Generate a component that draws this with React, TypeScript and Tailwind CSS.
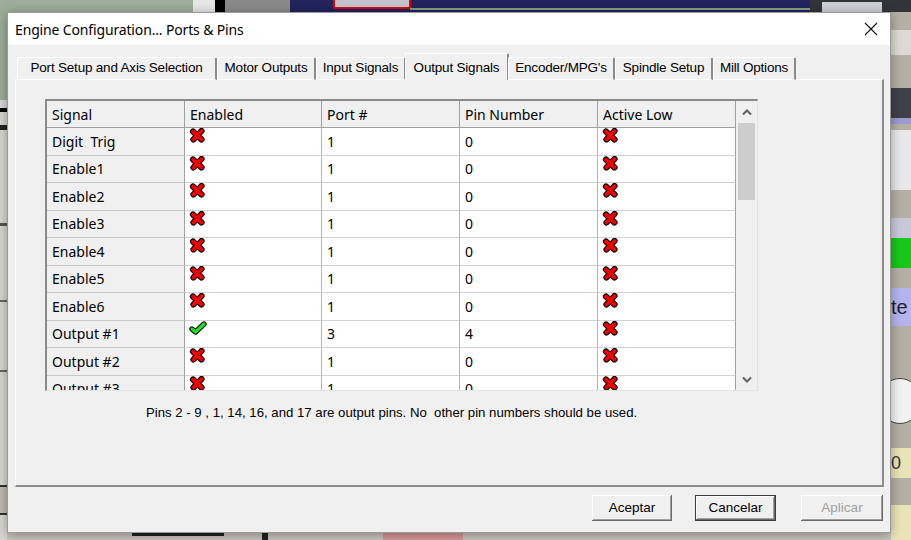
import React from 'react';

const rows = [
    { name: 'Digit  Trig', enabled: false, port: 1, pin: 0, low: false },
    { name: 'Enable1', enabled: false, port: 1, pin: 0, low: false },
    { name: 'Enable2', enabled: false, port: 1, pin: 0, low: false },
    { name: 'Enable3', enabled: false, port: 1, pin: 0, low: false },
    { name: 'Enable4', enabled: false, port: 1, pin: 0, low: false },
    { name: 'Enable5', enabled: false, port: 1, pin: 0, low: false },
    { name: 'Enable6', enabled: false, port: 1, pin: 0, low: false },
    { name: 'Output #1', enabled: true, port: 3, pin: 4, low: false },
    { name: 'Output #2', enabled: false, port: 1, pin: 0, low: false },
    { name: 'Output #3', enabled: false, port: 1, pin: 0, low: false }
];

const tabs = [
    { label: 'Port Setup and Axis Selection', w: 'w-[200px]' },
    { label: 'Motor Outputs', w: 'w-[99px]' },
    { label: 'Input Signals', w: 'w-[90px]' },
    { label: 'Output Signals', w: 'w-[104px]', active: true },
    { label: "Encoder/MPG's", w: 'w-[107px]' },
    { label: 'Spindle Setup', w: 'w-[98px]' },
    { label: 'Mill Options', w: 'w-[83px]' }
];

function RedX() {
    return (
        <svg width="17" height="15" viewBox="0 0 17 15">
            <path d="M4 3.5 L12.5 11.5 M12.5 3 L4.5 11.5" stroke="#000" strokeWidth="6.2" strokeLinecap="round" fill="none" />
            <path d="M4 3.5 L12.5 11.5 M12.5 3 L4.5 11.5" stroke="#f00000" strokeWidth="4" strokeLinecap="round" fill="none" />
        </svg>
    );
}

function GreenCheck() {
    return (
        <svg width="18" height="15" viewBox="0 0 18 15">
            <path d="M3 8 L6.5 11 L15 3" stroke="#000" strokeWidth="5.4" strokeLinecap="round" strokeLinejoin="round" fill="none" />
            <path d="M3 8 L6.5 11 L15 3" stroke="#22e022" strokeWidth="3.2" strokeLinecap="round" strokeLinejoin="round" fill="none" />
        </svg>
    );
}

function Chevron({ down }: { down?: boolean }) {
    return (
        <svg width="10" height="7" viewBox="0 0 10 7">
            <path d={down ? 'M1 1.5 L5 5.5 L9 1.5' : 'M1 5.5 L5 1.5 L9 5.5'} stroke="#606060" strokeWidth="2" fill="none" />
        </svg>
    );
}

function Desktop() {
    // the Mach3 screen behind the dialog
    return (
        <div className="absolute inset-0 bg-[#c9c5be] overflow-hidden">
            <div className="absolute left-0 top-0 w-[193px] h-[100px] bg-[#9cae97]" />
            <div className="absolute left-[193px] top-0 w-[22px] h-[12px] bg-[#e6e6e6]" />
            <div className="absolute left-[215px] top-0 w-[10px] h-[12px] bg-black" />
            <div className="absolute left-[225px] top-0 w-[65px] h-[12px] bg-[#8a8a8a]" />
            <div className="absolute left-[290px] top-0 w-[520px] h-[12px] bg-[#23235e]" />
            <div className="absolute left-[333px] top-0 w-[78px] h-[9px] bg-[#c4c4cc] border-2 border-[#e00000] border-t-0" />
            <div className="absolute left-[410px] top-[8px] w-[400px] h-[2px] bg-[#7fa07f]" />
            <div className="absolute left-[810px] top-0 w-[101px] h-[12px] bg-[#33333a]" />
            <div className="absolute left-[822px] top-[2px] w-[60px] h-[10px] bg-[#cfd0d6]" />
            <div className="absolute left-0 top-[100px] w-[7px] h-[440px] bg-[#d8d6d2]" />
            <div className="absolute left-0 top-[108px] w-[7px] h-[4px] bg-black" />
            <div className="absolute left-0 top-[125px] w-[7px] h-[5px] bg-[#222]" />
            <div className="absolute left-0 top-[223px] w-[7px] h-[3px] bg-[#555]" />
            <div className="absolute left-0 top-[300px] w-[7px] h-[2px] bg-[#666]" />
            <div className="absolute left-0 top-[370px] w-[7px] h-[2px] bg-[#666]" />
            <div className="absolute left-0 top-[485px] w-[7px] h-[30px] bg-[#bdbab0] border-y-2 border-[#333]" />
            <div className="absolute left-[891px] top-[12px] w-[20px] h-[528px] bg-[#b4b0a6]" />
            <div className="absolute left-[891px] top-[30px] w-[20px] h-[25px] bg-[#dcdad2]" />
            <div className="absolute left-[891px] top-[88px] w-[20px] h-[30px] bg-[#40404a]" />
            <div className="absolute left-[891px] top-[118px] w-[20px] h-[6px] bg-[#9a9ad0]" />
            <div className="absolute left-[891px] top-[130px] w-[20px] h-[60px] bg-[#e8e8ea]" />
            <div className="absolute left-[891px] top-[218px] w-[20px] h-[20px] bg-[#c8c8d8]" />
            <div className="absolute left-[891px] top-[238px] w-[20px] h-[30px] bg-[#18c818]" />
            <div className="absolute left-[891px] top-[288px] w-[20px] h-[38px] bg-[#b4b4ee] text-[20px] leading-[38px] text-[#222]">te</div>
            <div className="absolute left-[880px] top-[378px] w-[40px] h-[46px] rounded-full bg-[#f2f2f2] border border-[#444]" />
            <div className="absolute left-[891px] top-[448px] w-[20px] h-[30px] bg-[#e8e4b8] text-[18px] leading-[30px] text-[#333]">0</div>
            <div className="absolute left-[891px] top-[505px] w-[20px] h-[35px] bg-[#e8e4b8]" />
            <div className="absolute left-[132px] top-[533px] w-[92px] h-[3px] bg-[#222]" />
            <div className="absolute left-[262px] top-[533px] w-[6px] h-[7px] bg-[#222]" />
            <div className="absolute left-[383px] top-[533px] w-[80px] h-[7px] bg-[#d89898]" />
        </div>
    );
}

function Button({ label, isDefault, disabled }: { label: string; isDefault?: boolean; disabled?: boolean }) {
    return (
        <div
            className={
                isDefault
                    ? 'w-[81px] h-[26px] flex items-center justify-center bg-[#f0f0f0] border border-[#3c3c3c] shadow-[inset_-1px_-1px_#696969,inset_1px_1px_#ffffff,inset_-2px_-2px_#a0a0a0]'
                    : 'h-[26px] flex items-center justify-center bg-[#f0f0f0] shadow-[inset_-1px_-1px_#696969,inset_1px_1px_#ffffff,inset_-2px_-2px_#a0a0a0]'
            }
        >
            <span className={disabled ? 'text-[#a0a0a0]' : 'text-black'}>{label}</span>
        </div>
    );
}

export default function App() {
    return (
        <div className="relative w-[911px] h-[540px] overflow-hidden font-['Liberation_Sans',Arial,sans-serif]">
            <Desktop />

            <div className="absolute left-[7px] top-[12px] w-[884px] h-[521px] flex flex-col bg-[#f0f0f0] border border-[#9a9a9a] shadow-[0_2px_10px_rgba(0,0,0,0.35)]">
                {/* title bar */}
                <div className="h-[32px] shrink-0 bg-white flex items-center justify-between pl-[7px] pr-[12px]">
                    <span className="text-[14px] text-black font-['Noto_Sans','Open_Sans',sans-serif] tracking-[-0.15px]">
                        Engine Configuration... Ports &amp; Pins
                    </span>
                    <svg width="14" height="14" viewBox="0 0 14 14">
                        <path d="M1 1 L13 13 M13 1 L1 13" stroke="#111" strokeWidth="1.1" />
                    </svg>
                </div>

                {/* tabs */}
                <div className="flex items-end h-[27px] mt-[8px] pl-[9px] relative z-10 text-[13.5px] tracking-[-0.2px] text-black">
                    {tabs.map((tab) => (
                        <div
                            key={tab.label}
                            className={
                                tab.active
                                    ? `${tab.w} h-[27px] -mx-[1px] flex items-start pt-[4px] justify-center bg-[#f0f0f0] border-t border-l border-white border-r-2 border-r-[#8a8a8a] rounded-t-[2px]`
                                    : `${tab.w} h-[23px] flex items-center justify-center bg-[#f0f0f0] border-t border-l border-white border-r-2 border-r-[#8a8a8a] border-b border-b-white rounded-t-[2px]`
                            }
                        >
                            {tab.label}
                        </div>
                    ))}
                </div>

                {/* tab page */}
                <div className="ml-[7px] w-[869px] h-[408px] -mt-[1px] flex flex-col border-t border-l border-white border-r-2 border-b-2 border-r-[#8c8c8c] border-b-[#8c8c8c]">
                    <div className="ml-[29px] mt-[19px] w-[713px] h-[292px] flex border-t-2 border-l-2 border-t-[#8a8a8a] border-l-[#8a8a8a] border-r border-b border-r-[#e4e4e4] border-b-[#e4e4e4] bg-[#f0f0f0] overflow-hidden font-['Noto_Sans','Open_Sans',sans-serif] text-[14px] text-black">
                        <div className="w-[689px] flex flex-col shrink-0">
                            <div className="grid grid-cols-[138px_137px_138px_138px_138px] h-[27px] shrink-0">
                                {['Signal', 'Enabled', 'Port #', 'Pin Number', 'Active Low'].map((h) => (
                                    <div key={h} className="bg-[#f0f0f0] border-r border-b border-[#a0a0a0] flex items-center pl-[5px]">
                                        {h}
                                    </div>
                                ))}
                            </div>
                            {rows.map((r) => (
                                <div key={r.name} className="grid grid-cols-[138px_137px_138px_138px_138px] h-[27.5px] shrink-0">
                                    <div className="bg-[#f0f0f0] border-r border-r-[#a0a0a0] border-b border-b-[#c8c8c8] flex items-center pl-[5px] whitespace-pre">
                                        {r.name}
                                    </div>
                                    <div className="bg-white border-r border-r-[#b4b4b4] border-b border-b-[#d2d2d2] pl-[4px]">
                                        {r.enabled ? <GreenCheck /> : <RedX />}
                                    </div>
                                    <div className="bg-white border-r border-r-[#b4b4b4] border-b border-b-[#d2d2d2] flex items-center pl-[5px]">
                                        {r.port}
                                    </div>
                                    <div className="bg-white border-r border-r-[#b4b4b4] border-b border-b-[#d2d2d2] flex items-center pl-[5px]">
                                        {r.pin}
                                    </div>
                                    <div className="bg-white border-r border-r-[#a0a0a0] border-b border-b-[#d2d2d2] pl-[4px]">
                                        {r.low ? <GreenCheck /> : <RedX />}
                                    </div>
                                </div>
                            ))}
                        </div>
                        {/* scrollbar */}
                        <div className="flex-1 flex flex-col bg-[#f0f0f0] px-[2px]">
                            <div className="h-[22px] flex items-center justify-center">
                                <Chevron />
                            </div>
                            <div className="h-[77px] bg-[#cdcdcd]" />
                            <div className="flex-1" />
                            <div className="h-[22px] flex items-center justify-center">
                                <Chevron down />
                            </div>
                        </div>
                    </div>

                    <div className="mt-[12px] pl-[130px] text-[13.2px] text-black whitespace-pre">
                        Pins 2 - 9 , 1, 14, 16, and 17 are output pins. No  other pin numbers should be used.
                    </div>
                </div>

                {/* buttons */}
                <div className="flex justify-end items-center gap-[23px] mt-[8px] pr-[7px] text-[13.5px]">
                    <div className="w-[80px]">
                        <Button label="Aceptar" />
                    </div>
                    <Button label="Cancelar" isDefault />
                    <div className="w-[82px] ml-[2px]">
                        <Button label="Aplicar" disabled />
                    </div>
                </div>
            </div>
        </div>
    );
}
